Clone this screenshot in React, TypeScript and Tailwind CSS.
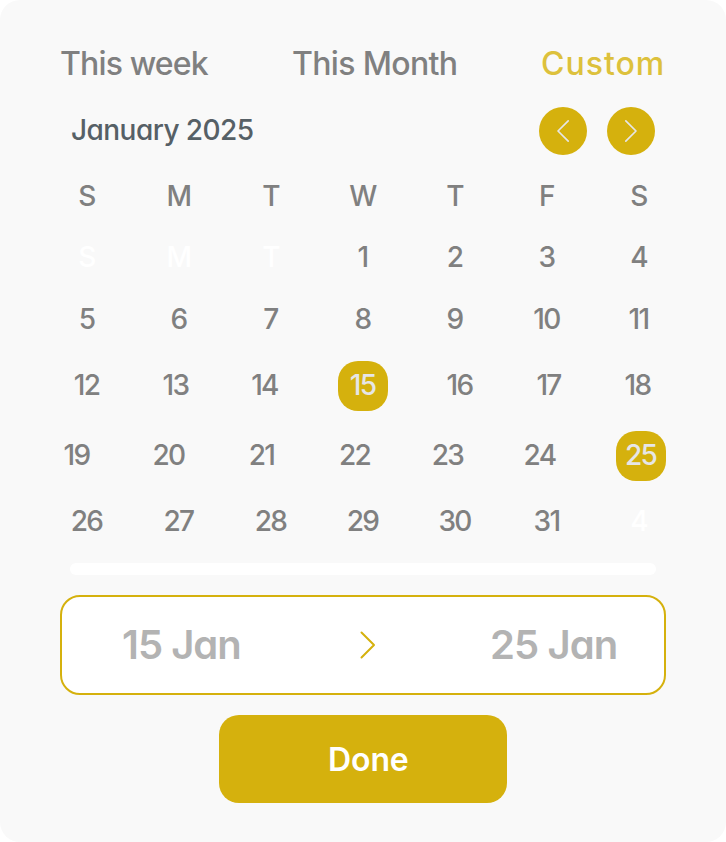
import React from "react";

type Day = { label: string; tone?: "ghost" | "selected" };

const rows: { layout: string; days: Day[] }[] = [
  {
    layout: "ml-[62px] h-[61px] grid-cols-[92px_92px_92px_92px_92px_92px_50px]",
    days: ["S", "M", "T", "W", "T", "F", "S"].map((label) => ({ label })),
  },
  {
    layout: "ml-[62px] h-[62px] grid-cols-[92px_92px_92px_92px_92px_92px_50px]",
    days: [
      { label: "S", tone: "ghost" },
      { label: "M", tone: "ghost" },
      { label: "T", tone: "ghost" },
      { label: "1" },
      { label: "2" },
      { label: "3" },
      { label: "4" },
    ],
  },
  {
    layout: "ml-[62px] h-[62px] grid-cols-[92px_92px_92px_92px_92px_92px_50px]",
    days: ["5", "6", "7", "8", "9", "10", "11"].map((label) => ({ label })),
  },
  {
    layout: "ml-[62px] h-[70px] grid-cols-[89px_89px_98px_97px_89px_89px_50px]",
    days: [
      { label: "12" },
      { label: "13" },
      { label: "14" },
      { label: "15", tone: "selected" },
      { label: "16" },
      { label: "17" },
      { label: "18" },
    ],
  },
  {
    layout: "ml-[52px] h-[70px] grid-cols-[92px_93px_93px_93px_92px_101px_50px]",
    days: [
      { label: "19" },
      { label: "20" },
      { label: "21" },
      { label: "22" },
      { label: "23" },
      { label: "24" },
      { label: "25", tone: "selected" },
    ],
  },
  {
    layout: "ml-[62px] h-[62px] grid-cols-[92px_92px_92px_92px_92px_92px_50px]",
    days: [
      { label: "26" },
      { label: "27" },
      { label: "28" },
      { label: "29" },
      { label: "30" },
      { label: "31" },
      { label: "4", tone: "ghost" },
    ],
  },
];

const tones = {
  normal: "text-[#808080]",
  ghost: "text-white",
  selected: "rounded-[20px] bg-[#d5b10d] text-[#e6e6e6]",
};

function DayCell({ label, tone }: Day) {
  return (
    <div className={`flex h-[50px] w-[50px] items-center justify-center pr-[1px] pb-[2px] tracking-[-1.7px] ${tones[tone ?? "normal"]}`}>
      <span>{label}</span>
    </div>
  );
}

function NavButton({ points, label }: { points: string; label: string }) {
  return (
    <button aria-label={label} className="h-12 w-12 rounded-full bg-[#d5b10d]">
      <svg viewBox="0 0 48 48" className="h-12 w-12" fill="none" stroke="#e6e6e6" strokeWidth="1.7" strokeLinecap="round" strokeLinejoin="round">
        <polyline points={points} />
      </svg>
    </button>
  );
}

export default function App() {
  return (
    <div className="h-[842px] w-[726px] bg-white">
      <div
        className="flex h-[842px] w-[726px] flex-col overflow-hidden rounded-[20px] bg-[#f9f9f9] font-[Inter,'Noto_Sans',sans-serif] font-medium whitespace-nowrap"
        style={{ fontFeatureSettings: '"cv11"' }}
      >
        <div className="flex h-[107px] shrink-0 items-start pt-[44px] text-[32px] leading-[40px] text-[#808080]">
          <span className="ml-[60px] w-[232px] tracking-[-0.85px]">This week</span>
          <span className="w-[249px] tracking-[-0.65px]">This Month</span>
          <span className="tracking-[1px] text-[#ddc13c]">Custom</span>
        </div>
        <div className="flex h-12 shrink-0 items-center">
          <span className="ml-[71px] w-[468px] pb-[2px] text-[28px] leading-[40px] tracking-[-0.55px] text-[#566066]">January 2025</span>
          <div className="flex gap-5">
            <NavButton label="Previous month" points="29.2,13.9 19,24 29.2,34.1" />
            <NavButton label="Next month" points="18.8,13.9 29,24 18.8,34.1" />
          </div>
        </div>
        <div className="mt-[11px] shrink-0 text-[28px] leading-[40px]">
          {rows.map((row, i) => (
            <div key={i} className={`grid items-center ${row.layout}`}>
              {row.days.map((day, j) => (
                <DayCell key={j} {...day} />
              ))}
            </div>
          ))}
        </div>
        <div className="mt-[10px] ml-[70px] h-3 w-[586px] shrink-0 rounded-full bg-white" />
        <div className="mt-[20px] ml-[60px] flex h-[100px] w-[606px] shrink-0 items-center rounded-[20px] border-2 border-[#d5b10d] bg-white text-[40px] font-semibold leading-[48px] text-[#b3b3b3]">
          <span className="ml-[60px] w-[226px] tracking-[-1px]">15 Jan</span>
          <svg viewBox="0 0 40 40" className="h-10 w-10" fill="none" stroke="#d5b10d" strokeWidth="2" strokeLinecap="round" strokeLinejoin="round">
            <polyline points="13.5,7.5 26,20 13.5,32.5" />
          </svg>
          <span className="ml-[102px] tracking-[-0.9px]">25 Jan</span>
        </div>
        <button className="mt-[20px] ml-[219px] flex h-[88px] w-[288px] shrink-0 items-center rounded-[20px] bg-[#d5b10d] pt-[2px] pl-[109px] text-[32px] font-semibold leading-[40px] tracking-[-0.1px] text-white">
          Done
        </button>
      </div>
    </div>
  );
}
